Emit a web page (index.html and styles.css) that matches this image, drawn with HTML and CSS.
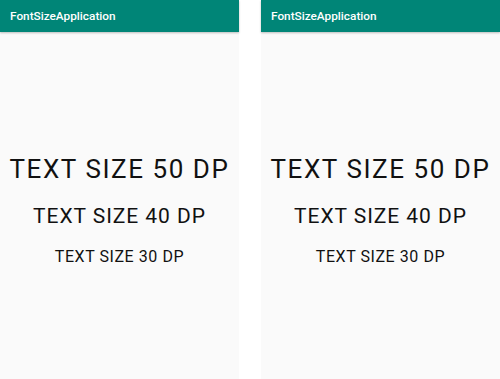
FILE: index.html
```html
<!DOCTYPE html>
<html>
	<head>
		<meta name="viewport" content="width=device-width, initial-scale=1" />
		<title>FontSizeApplication</title>
		<link rel="stylesheet" href="styles.css">
	</head>
	<body>
		<div class="Screens">
			<div class="Phone">
				<div class="AppBar">FontSizeApplication</div>
				<div class="Content">
					<div class="Text Size50">TEXT SIZE 50 DP</div>
					<div class="Text Size40">TEXT SIZE 40 DP</div>
					<div class="Text Size30">TEXT SIZE 30 DP</div>
				</div>
			</div>
			<div class="Phone">
				<div class="AppBar">FontSizeApplication</div>
				<div class="Content">
					<div class="Text Size50">TEXT SIZE 50 DP</div>
					<div class="Text Size40">TEXT SIZE 40 DP</div>
					<div class="Text Size30">TEXT SIZE 30 DP</div>
				</div>
			</div>
		</div>
	</body>
</html>
```

FILE: styles.css
```css
:root
{
	--primary: #008577;
	--window: #fafafa;
	--text: #111;
}

html,
body
{
	margin: 0;
	padding: 0;
	background: #fff;
	font-family: Roboto, "Liberation Sans", sans-serif;
}

.Screens
{
	display: flex;
	flex-direction: row;
	justify-content: space-between;
	height: 379px;
}

.Phone
{
	width: 239px;
	height: 100%;
	display: flex;
	flex-direction: column;
	background: var(--window);
}

.AppBar
{
	height: 32px;
	box-sizing: border-box;
	padding-left: 10px;
	display: flex;
	align-items: center;
	background: var(--primary);
	color: #fff;
	font-size: 11.8px;
	font-weight: 500;
	box-shadow: 0 1px 2px rgba(0,0,0,0.25);
	position: relative;
	z-index: 1;
}

.Content
{
	flex: 1;
	display: flex;
	flex-direction: column;
	align-items: center;
	padding-top: 122px;
}

.Text
{
	color: var(--text);
	white-space: nowrap;
}

.Size50	{	font-size: 26px;	letter-spacing: 0.06em;	}
.Size40	{	font-size: 21px;	letter-spacing: 0.045em;	margin-top: 20px;	}
.Size30	{	font-size: 16px;	letter-spacing: 0.035em;	margin-top: 19px;	}
```
